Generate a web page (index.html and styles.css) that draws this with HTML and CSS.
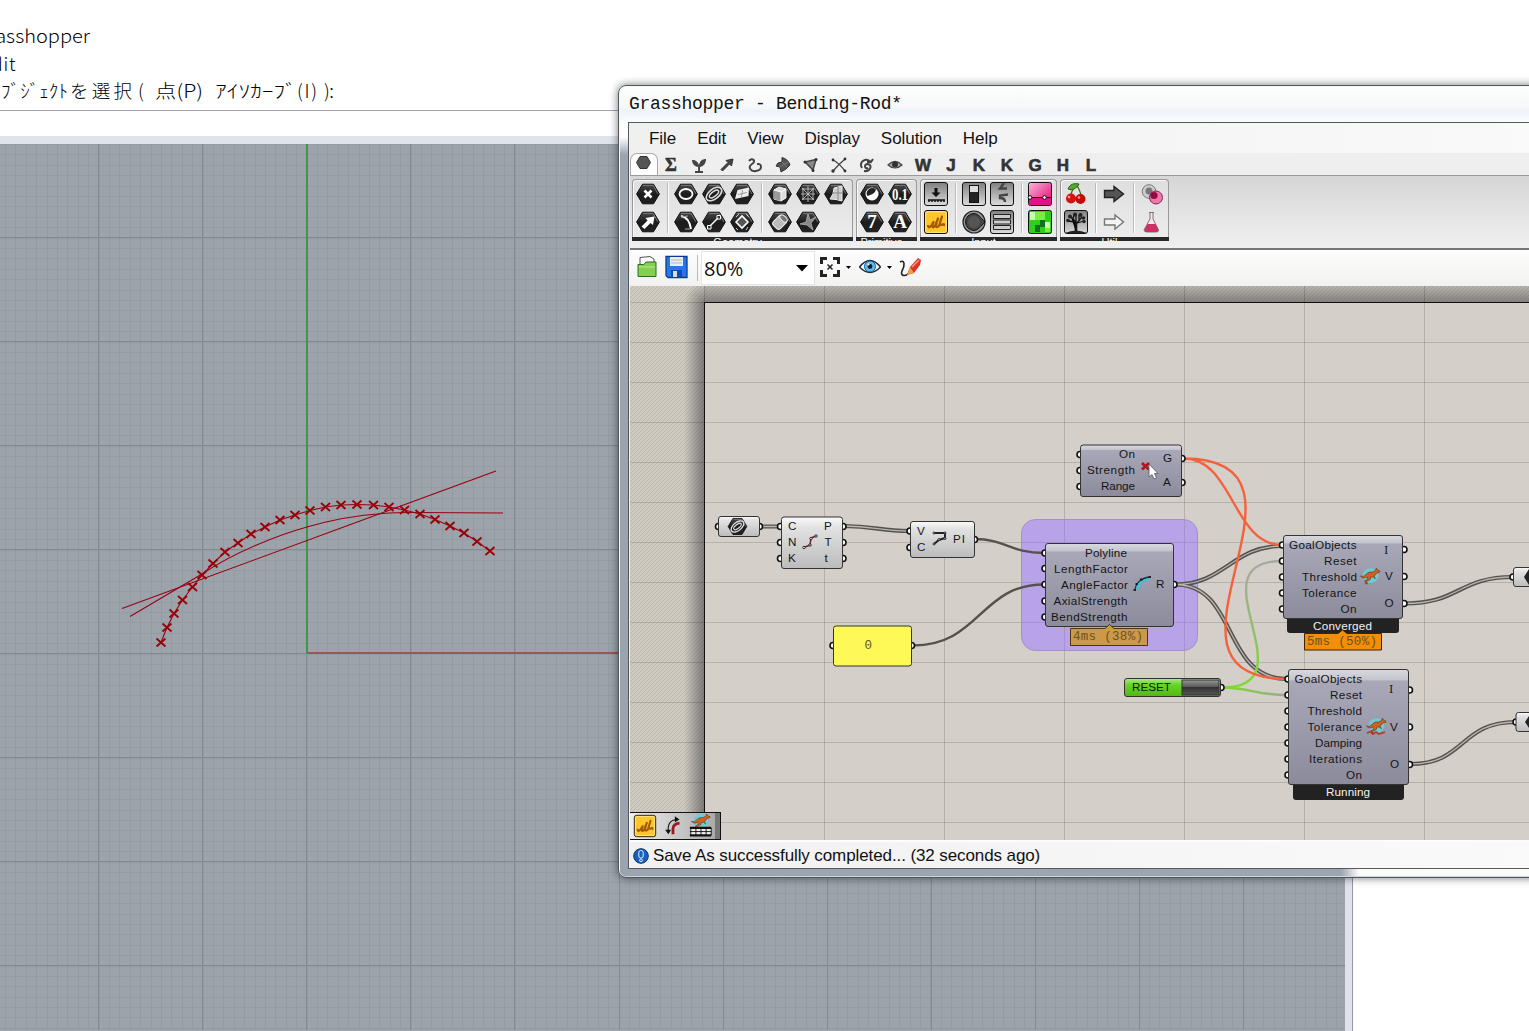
FILE: index.html
```html
<!DOCTYPE html>
<html lang="ja">
<head>
<meta charset="utf-8">
<title>Grasshopper - Bending-Rod*</title>
<link rel="stylesheet" href="styles.css">
</head>
<body>
<svg class="defs" aria-hidden="true">
  <defs>
    <linearGradient id="hexfill" x1="0" y1="0" x2="0" y2="1"><stop offset="0" stop-color="#4a4a4a"/><stop offset=".5" stop-color="#1c1c1c"/><stop offset="1" stop-color="#222"/></linearGradient>
    <linearGradient id="btn" x1="0" y1="0" x2="0" y2="1"><stop offset="0" stop-color="#808080"/><stop offset="1" stop-color="#dcdcdc"/></linearGradient>
    <linearGradient id="lite" x1="0" y1="0" x2="0" y2="1"><stop offset="0" stop-color="#fbfbfb"/><stop offset=".2" stop-color="#e2e2e2"/><stop offset="1" stop-color="#bcbcbc"/></linearGradient>
    <linearGradient id="dusk" x1="0" y1="0" x2="0" y2="1"><stop offset="0" stop-color="#d9d9e0"/><stop offset=".09" stop-color="#c4c4ce"/><stop offset=".1" stop-color="#a9a8b8"/><stop offset="1" stop-color="#8c8b9b"/></linearGradient>
    <linearGradient id="green" x1="0" y1="0" x2="0" y2="1"><stop offset="0" stop-color="#b0ec88"/><stop offset=".35" stop-color="#66d426"/><stop offset="1" stop-color="#52b812"/></linearGradient>
    <linearGradient id="knob" x1="0" y1="0" x2="0" y2="1"><stop offset="0" stop-color="#999"/><stop offset=".45" stop-color="#5a5a5a"/><stop offset=".5" stop-color="#333"/><stop offset="1" stop-color="#555"/></linearGradient>
    <linearGradient id="pink" x1="0" y1="0" x2="1" y2="1"><stop offset="0" stop-color="#fbb6dc"/><stop offset="1" stop-color="#e0006e"/></linearGradient>
    <linearGradient id="wireA" gradientUnits="userSpaceOnUse" x1="0" y1="687" x2="0" y2="561"><stop offset="0" stop-color="#7bdc2c"/><stop offset=".5" stop-color="#94bb70"/><stop offset="1" stop-color="#a9a9a2"/></linearGradient>
    <linearGradient id="wireB" gradientUnits="userSpaceOnUse" x1="1222" y1="0" x2="1288" y2="0"><stop offset="0" stop-color="#7bdc2c"/><stop offset="1" stop-color="#9ca892"/></linearGradient>
    <linearGradient id="shadeL" x1="0" y1="0" x2="1" y2="0"><stop offset="0" stop-color="#555" stop-opacity="0"/><stop offset="1" stop-color="#555" stop-opacity=".68"/></linearGradient>
    <linearGradient id="shadeT" x1="0" y1="0" x2="0" y2="1"><stop offset="0" stop-color="#555" stop-opacity=".2"/><stop offset="1" stop-color="#555" stop-opacity=".62"/></linearGradient>
    <radialGradient id="shadeC" gradientUnits="userSpaceOnUse" cx="704" cy="302" r="20"><stop offset="0" stop-color="#555" stop-opacity=".62"/><stop offset="1" stop-color="#555" stop-opacity="0"/></radialGradient>
    <pattern id="hatch" width="4" height="4" patternUnits="userSpaceOnUse"><path d="M-1 5L5-1M-1 1L1-1M3 5L5 3" stroke="#b7b3a9" stroke-width=".8"/></pattern>
    <marker id="pt" markerWidth="12" markerHeight="12" refX="6" refY="6" markerUnits="userSpaceOnUse" orient="0"><path d="M1.500 2L10.500 10M10.500 2L1.500 10" stroke="#990008" stroke-width="1.8"/></marker>
    <symbol id="hex" viewBox="0 0 28 28"><path d="M8.500 4.200H19.500L25.400 14L19.500 23.800H8.500L2.600 14Z" fill="url(#hexfill)" stroke="#111"/><path d="M9 5.400H19L24 14" fill="none" stroke="#888" stroke-width=".8"/></symbol>
    <symbol id="box" viewBox="0 0 28 28"><rect x="2.500" y="2.500" width="23" height="23" rx="2.500" fill="url(#btn)" stroke="#111"/></symbol>
    <symbol id="scribble" viewBox="0 0 28 28"><rect x="2.500" y="2.500" width="23" height="23" rx="2.500" fill="#ffc62b" stroke="#111"/><rect x="3.700" y="3.700" width="20.600" height="20.600" rx="1.500" fill="none" stroke="#ffe58c"/><path d="M6 17Q6 21 9 18L11.500 14Q9 22 13 18L16 10.500Q12 22 17 18L20 8.500Q16 19 20.500 16.500Q22.500 15 22 18" fill="none" stroke="#a45b00" stroke-width="2.200" stroke-linejoin="round"/></symbol>
    <symbol id="roo" viewBox="0 0 24 20"><ellipse cx="12" cy="9.500" rx="9" ry="8.500" fill="#6ccbd3"/><path d="M.5 10Q4 12 7 8Q10 4.500 14.500 5.500L18 3.500L18.500 1L20 3L23 4.500L22 6L19 6.500Q18 9 16 10L17.500 13L15 11L12 11.500Q13 14 10 15L7.500 16L8.500 19H6.500L5.500 15.500L9 13.500L8 11Q4 14 .5 10Z" fill="#d3601f" stroke="#4c2a18" stroke-width=".6"/></symbol>
    <symbol id="ring" viewBox="0 0 28 28"><g fill="none" stroke="#ddd"><ellipse cx="14" cy="14" rx="9" ry="5" transform="rotate(-38 14 14)" stroke-width="1.600"/><ellipse cx="14" cy="14" rx="5.500" ry="2.400" transform="rotate(-38 14 14)" stroke-width="1.400"/></g></symbol>
  </defs>
</svg>

<main class="rhino">
  <svg class="command" viewBox="0 0 619 110">
    <text x="90" y="43" text-anchor="end" textLength="115" lengthAdjust="spacingAndGlyphs">Grasshopper</text>
    <text x="15.500" y="70.500" text-anchor="end" textLength="24">dit</text>
    <text x="1" y="98" textLength="67" lengthAdjust="spacingAndGlyphs">ﾌﾞｼﾞｪｸﾄ</text>
    <text x="70" y="98" textLength="62">を選択</text>
    <text x="138" y="98">(</text>
    <text x="155" y="98" textLength="48" lengthAdjust="spacingAndGlyphs">点(P)</text>
    <text x="215" y="98" textLength="82" lengthAdjust="spacingAndGlyphs">ｱｲｿｶｰﾌﾞ</text>
    <text x="297" y="98" textLength="20">(I)</text>
    <text x="324" y="98" textLength="10">):</text>
  </svg>
  <section class="viewport">
    <svg viewBox="0 144 1345 887" width="1345" height="887">
      <g fill="none" shape-rendering="crispEdges">
        <path d="M-5.500 587H1345" stroke="#939ba3" stroke-width="886" stroke-dasharray="1 9.4"/>
        <path d="M672 133.500V1031" stroke="#939ba3" stroke-width="1345" stroke-dasharray="1 9.4"/>
        <path d="M-6 587H1345" stroke="#838a93" stroke-width="886" stroke-dasharray="1 103.100"/>
        <path d="M672 133.500V1031" stroke="#838a93" stroke-width="1345" stroke-dasharray="1 102.900"/>
        <path d="M307 144V653" stroke="#3e9848" stroke-width="2"/>
        <path d="M307 653H1345" stroke="#9b5555" stroke-width="2"/>
      </g>
      <g fill="none" stroke="#990012" stroke-width="1.100">
        <path d="M122 608.500L496 471"/>
        <path d="M130 616.500L202 574C235 552 278 535 307 527Q345 516 383 513.500Q395 512.500 413 512.500L503 513"/>
        <polyline marker-start="url(#pt)" marker-mid="url(#pt)" marker-end="url(#pt)" points="161,642.500 167,627.500 174,613.500 182.500,600 192.500,587 202,575 213,563.500 225,552 238,543 251,534 265,527 280,520 295,515 310,510.500 325.500,507 341,505 357,504.500 373.500,505 389,507 404.500,510 420,514 435,519.500 450,526 464,533 477,541.500 490,551"/>
      </g>
    </svg>
  </section>
</main>

<div class="window">
  <header class="titlebar">Grasshopper - Bending-Rod*</header>
  <div class="client">
    <nav class="menu"><span>File</span><span>Edit</span><span>View</span><span>Display</span><span>Solution</span><span>Help</span></nav>
    <div class="tabs">
      <span class="tab active"><svg viewBox="0 0 28 22"><path d="M10 4.500H17L20.500 10.500L17 16.500H10L6.500 10.500Z" fill="#555" stroke="#333"/></svg></span>
      <span class="tab sigma">Σ</span>
      <span class="tab"><svg viewBox="0 0 28 22"><path d="M14 18V13C10 13 7 10 7 6C11 6 13 8 14 11C15 7 17 5 21 5C21 9 19 12 15 13V18" fill="#444"/><path d="M10 18H18M14 11V18" stroke="#444" stroke-width="1.800"/></svg></span>
      <span class="tab"><svg viewBox="0 0 28 22"><path d="M8 15.500L15 8.500L13 6.500L20 5L18.500 12L16.500 10L9.500 17Z" fill="#444" stroke="#333"/></svg></span>
      <span class="tab"><svg viewBox="0 0 28 22"><path d="M8 7C11 3 16 7 11 10C6 13 10 18 15 17C22 16 21 9 16 10" fill="none" stroke="#444" stroke-width="2"/></svg></span>
      <span class="tab"><svg viewBox="0 0 28 22"><path d="M13 3.500Q19 5 21 11Q17 16 12 18L11 13L7 12Q8 8 13 8Z" fill="#555" stroke="#333"/><path d="M13 8L18 13M11 13L19 8" stroke="#888" stroke-width=".7"/></svg></span>
      <span class="tab"><svg viewBox="0 0 28 22"><path d="M8 8L19 5.500L16 16Z" fill="#888" stroke="#444" stroke-width="1.500"/><g fill="#333"><circle cx="8" cy="8" r="1.500"/><circle cx="19" cy="5.500" r="1.500"/><circle cx="16" cy="16.500" r="1.500"/></g></svg></span>
      <span class="tab"><svg viewBox="0 0 28 22"><path d="M8 6Q14 9 20 17M20 5Q14 10 8 17" fill="none" stroke="#444" stroke-width="1.300"/><g fill="#333"><circle cx="8" cy="6" r="1.400"/><circle cx="20" cy="5" r="1.400"/><circle cx="8" cy="17" r="1.700"/><circle cx="20" cy="17" r="1.400"/></g></svg></span>
      <span class="tab"><svg viewBox="0 0 28 22"><path d="M9 14C5 8 13 3 18 8L20 5M18 8H14M11 17C17 18 20 11 15 10C11 10 11 15 15 14" fill="none" stroke="#444" stroke-width="2"/></svg></span>
      <span class="tab"><svg viewBox="0 0 28 22"><path d="M7 11Q14 4 21 11Q14 17 7 11Z" fill="#aaa" stroke="#444" stroke-width="1.200"/><circle cx="14" cy="10.500" r="3" fill="#333"/></svg></span>
      <span class="tab">W</span><span class="tab">J</span><span class="tab">K</span><span class="tab">K</span><span class="tab">G</span><span class="tab">H</span><span class="tab">L</span>
    </div>
    <div class="ribbon">
      <section class="group">
        <div class="icons">
          <div class="cells c1">
            <svg viewBox="0 0 28 28"><use href="#hex"/><path d="M10.500 10.500L17.500 17.500M17.500 10.500L10.500 17.500" stroke="#fff" stroke-width="2.600"/></svg>
            <svg viewBox="0 0 28 28"><use href="#hex"/><path d="M7.500 18.500L13.500 12.500L11.500 10L20.500 8.500L19 17L16.500 15L10.500 21Z" fill="#fff"/></svg>
          </div>
          <div class="cells c3">
            <svg viewBox="0 0 28 28"><use href="#hex"/><ellipse cx="14" cy="14" rx="6.500" ry="5" fill="none" stroke="#fff" stroke-width="1.800"/></svg>
            <svg viewBox="0 0 28 28"><use href="#hex"/><use href="#ring"/></svg>
            <svg viewBox="0 0 28 28"><use href="#hex"/><path d="M7 19L9.500 10L21 7.500L20.500 16Z" fill="#eee"/><path d="M10 14.500L19 12.500M14.500 10L13.500 17" stroke="#999"/></svg>
            <svg viewBox="0 0 28 28"><use href="#hex"/><path d="M9 8C15 9 18 14 19 21" fill="none" stroke="#fff" stroke-width="2"/><path d="M9 9L16 8M18 21L13 21" stroke="#aaa"/></svg>
            <svg viewBox="0 0 28 28"><use href="#hex"/><path d="M9 19L19 9" stroke="#fff" stroke-width="1.500"/><path d="M7.500 17.500H11V21H7.500ZM17 7.500H20.500V11H17Z" fill="#333" stroke="#fff"/></svg>
            <svg viewBox="0 0 28 28"><use href="#hex"/><path d="M8 14L14 8L20 14L14 20Z" fill="#555" stroke="#fff" stroke-width="1.600"/><path d="M11 6L8 9M18 6L21 9M8 20L10 22M20 19L18 22" stroke="#ccc"/></svg>
          </div>
          <div class="cells c3">
            <svg viewBox="0 0 28 28"><use href="#hex"/><path d="M8 10L13 7L20 9V18L15 21L8 19Z" fill="#ddd" stroke="#eee"/><path d="M8 10L15 12V21L8 19Z" fill="#999"/><path d="M8 10L15 12L20 9M15 12V21" fill="none" stroke="#fff"/></svg>
            <svg viewBox="0 0 28 28"><use href="#hex"/><path d="M8 9H20M7 14H21M8 19H20M9 8V20M14 6V22M19 8V20M8 8L20 20M20 8L8 20" stroke="#bbb" stroke-width=".9"/></svg>
            <svg viewBox="0 0 28 28"><use href="#hex"/><path d="M8 19Q12 14 12 8L20 6V21Q14 19 8 19Z" fill="#ccc" stroke="#eee"/><path d="M16 7V20M11 13L20 13" stroke="#888"/></svg>
            <svg viewBox="0 0 28 28"><use href="#hex"/><g transform="rotate(45 14 14)"><rect x="9" y="8" width="10" height="13" rx="3" fill="#bbb" stroke="#eee"/><ellipse cx="14" cy="9" rx="4.500" ry="2.500" fill="#777" stroke="#eee"/></g></svg>
            <svg viewBox="0 0 28 28"><use href="#hex"/><path d="M6 16L12 14L14 6L16 12L22 9L17 15L19 22L13 17Z" fill="#888" stroke="#bbb" stroke-width=".7"/></svg>
          </div>
        </div>
        <footer><span>Geometry</span></footer>
      </section>
      <section class="group">
        <div class="icons">
          <div class="cells c2">
            <svg viewBox="0 0 28 28"><use href="#hex"/><circle cx="14" cy="14" r="6.500" fill="#fff"/><path d="M10 10A5.500 5.500 0 0 1 18 9.500Q17 14 9.500 16A5 5 0 0 1 10 10Z" fill="#222"/></svg>
            <svg viewBox="0 0 28 28" class="glyph"><use href="#hex"/><text x="14" y="19.500" font-size="16" textLength="16" lengthAdjust="spacingAndGlyphs">0.1</text></svg>
            <svg viewBox="0 0 28 28" class="glyph"><use href="#hex"/><text x="14" y="20" font-size="19">7</text></svg>
            <svg viewBox="0 0 28 28" class="glyph"><use href="#hex"/><text x="14" y="20" font-size="19">A</text></svg>
          </div>
        </div>
        <footer><span>Primitive</span></footer>
      </section>
      <section class="group">
        <div class="icons">
          <div class="cells c1">
            <svg viewBox="0 0 28 28"><use href="#box"/><path d="M12.500 8H15.500V12.500H18.500L14 17L9.500 12.500H12.500Z" fill="#111"/><path d="M6 20H23M7 20V22M10 20V22M13 20V22M16 20V22M19 20V22M22 20V22" stroke="#111" stroke-width="1.500"/></svg>
            <svg viewBox="0 0 28 28"><use href="#scribble"/></svg>
          </div>
          <div class="cells c2">
            <svg viewBox="0 0 28 28"><use href="#box"/><rect x="9.500" y="5.500" width="9" height="17" fill="#ddd" stroke="#111"/><rect x="10" y="12" width="8" height="10" fill="#222"/></svg>
            <svg viewBox="0 0 28 28"><use href="#box"/><path d="M16 3L12 8.500H19M20 14.500L12 15.500V18Q17 18 17 22" fill="none" stroke="#444" stroke-width="2.400"/></svg>
            <svg viewBox="0 0 28 28"><circle cx="14" cy="14" r="11" fill="#999" stroke="#222" stroke-width="1.200"/><path d="M14 5.500A8.500 8.500 0 1 0 14 22.500C18 22.500 21 18 25 14C21 10 18 5.500 14 5.500Z" fill="#444" stroke="#111"/><circle cx="14" cy="14" r="6" fill="#555"/></svg>
            <svg viewBox="0 0 28 28"><use href="#box"/><path d="M5.500 6.500H22.500V10.500H5.500ZM5.500 12H22.500V16H5.500ZM5.500 17.500H22.500V21.500H5.500Z" fill="#ccc" stroke="#222"/></svg>
          </div>
          <div class="cells c1">
            <svg viewBox="0 0 28 28"><rect x="2.500" y="2.500" width="23" height="23" rx="2" fill="url(#pink)" stroke="#111"/><path d="M3 17.500H25" stroke="#111"/><rect x="3" y="18" width="22" height="7" fill="#df148b"/><circle cx="4" cy="17.500" r="1.800" fill="#fff" stroke="#111"/><circle cx="18.500" cy="17.500" r="1.800" fill="#fff" stroke="#111"/></svg>
            <svg viewBox="0 0 28 28"><rect x="2.500" y="2.500" width="23" height="23" rx="2" fill="#2ed01b" stroke="#111"/><path d="M4 4H9V12H4ZM19 14H24V20H19Z" fill="#c7ffa8"/><path d="M14 12H19V19H14ZM9 17H14V24H9Z" fill="#11711d"/><path d="M9 4H19V12H9ZM19 20H24V24H19Z" fill="#72f340"/></svg>
          </div>
        </div>
        <footer><span>Input</span></footer>
      </section>
      <section class="group">
        <div class="icons">
          <div class="cells c1">
            <svg viewBox="0 0 28 28"><path d="M15 5C10 9 9 12 9 16M15 5C17 10 19 12 19 16" fill="none" stroke="#4c6b20" stroke-width="1.300"/><path d="M6 9C8 4 12 3 17 4C15 8 10 11 6 9Z" fill="#56a82d" stroke="#245f12"/><circle cx="9" cy="18.500" r="5" fill="#d51212"/><circle cx="18.500" cy="19" r="5" fill="#c40909"/><circle cx="7" cy="17" r="1.300" fill="#ff9c9c"/><circle cx="17" cy="17.500" r="1.300" fill="#ff9c9c"/></svg>
            <svg viewBox="0 0 28 28"><use href="#box"/><path d="M14 24V14L9 9M14 16L20 9M14 14L14 6M13 14L6 13M15 15L22 13M11 11L12 7M17 12L17 7" stroke="#111" stroke-width="1.300"/><path d="M14 24V14" stroke="#111" stroke-width="2.600"/><g fill="#222"><circle cx="8" cy="8.500" r="2"/><circle cx="13" cy="6.500" r="2"/><circle cx="18.500" cy="7" r="2"/><circle cx="21.500" cy="10" r="1.800"/><circle cx="6" cy="12.500" r="1.800"/><circle cx="22" cy="13.500" r="1.700"/></g><path d="M3 25Q14 20 25 25" fill="#222"/></svg>
          </div>
          <div class="cells c1">
            <svg viewBox="0 0 28 28"><path d="M4.500 10.500H14V6.500L23.500 14L14 21.500V17.500H4.500Z" fill="#555" stroke="#222" stroke-width="1.400"/></svg>
            <svg viewBox="0 0 28 28"><path d="M4.500 11H15V7L23.500 14L15 21V17H4.500Z" fill="#f4f4f4" stroke="#777" stroke-width="1.400"/></svg>
          </div>
          <div class="cells c1">
            <svg viewBox="0 0 28 28"><circle cx="11" cy="11.500" r="6.800" fill="#ccc" stroke="#777"/><circle cx="11" cy="11" r="3.500" fill="#777"/><circle cx="18" cy="17.500" r="6.500" fill="#ee78ab" stroke="#8f2253"/><circle cx="16" cy="15.500" r="3.600" fill="#8d0c45"/></svg>
            <svg viewBox="0 0 28 28"><path d="M11 4.500H16M12 5V11L6 22Q6 24 9 24H18Q21 24 20.500 22L15 11V5" fill="#f6e5ec" stroke="#777"/><path d="M9.500 16H17.500L20.500 22Q20 24 18 24H8Q6 23 6.500 21.500Z" fill="#ce3066"/></svg>
          </div>
        </div>
        <footer><span>Util</span></footer>
      </section>
    </div>
    <div class="toolbar">
      <svg class="open" viewBox="0 0 20 24"><path d="M3 11V2.500L13 1.500L17 4V11" fill="#fafafa" stroke="#555"/><path d="M1 9.500H7L9 7H19V21.500H1Z" fill="#84cf50" stroke="#277320"/><path d="M2 12H18" stroke="#b7ec90"/></svg>
      <svg class="save" viewBox="0 0 23 24"><path d="M1 1.500H22V22.500H3L1 20.500Z" fill="#2679e4" stroke="#0b3c91" stroke-width="1.300"/><path d="M5 2H18V11H5Z" fill="#e7edf3"/><path d="M6 5H17M6 8H17" stroke="#bbb"/><path d="M6 15H17V22H6Z" fill="#0d4db0"/><path d="M8 16H12V22H8Z" fill="#ddd"/></svg>
      <i class="rule"></i>
      <div class="combo"><span>80%</span><svg width="12" height="7"><path d="M0 0H12L6 6.500Z"/></svg></div>
      <svg class="focus" viewBox="0 0 20 20"><path d="M1.500 7V1.500H7M13 1.500H18.500V7M18.500 13V18.500H13M7 18.500H1.500V13" fill="none" stroke="#222" stroke-width="3"/><path d="M7.500 7.500L12.500 12.500M12.500 7.500L7.500 12.500" stroke="#222" stroke-width="1.500"/></svg>
      <svg class="caret" width="5" height="3"><path d="M0 0H5L2.500 3Z"/></svg>
      <svg class="eye" viewBox="0 0 22 16"><path d="M.5 8Q11-5 21.500 8Q11 19 .5 8Z" fill="#eef7fb" stroke="#223" stroke-width="1.300"/><circle cx="11" cy="7.500" r="5.500" fill="#64b9e8" stroke="#11609b"/><circle cx="11" cy="7.500" r="2.400" fill="#0b1c33"/><circle cx="9.500" cy="5.500" r="1" fill="#fff"/></svg>
      <svg class="caret" width="5" height="3"><path d="M0 0H5L2.500 3Z"/></svg>
      <svg class="pen" viewBox="0 0 22 20"><path d="M1 5C6 2 6 9 3 14C1 19 6 20 10 16" fill="none" stroke="#222" stroke-width="1.600"/><path d="M11 10L19 1L22 3L21 8L15 16L8 18Z" fill="#dc3525"/><path d="M11 10L15 16L8 18Z" fill="#e9a04c"/><path d="M13 10L20 3" stroke="#ff9a84" stroke-width="1.500"/></svg>
    </div>
    <div class="canvas">
      <svg class="graph" viewBox="630 286 899 554" width="899" height="554">
        <rect x="630" y="286" width="899" height="554" fill="#cfcbc1"/>
        <rect x="630" y="286" width="899" height="554" fill="url(#hatch)"/>
        <rect x="684" y="302" width="20" height="538" fill="url(#shadeL)"/>
        <rect x="704" y="286" width="825" height="16" fill="url(#shadeT)"/>
        <rect x="684" y="286" width="20" height="16" fill="url(#shadeC)"/>
        <rect x="704.500" y="302.500" width="840" height="560" fill="#d4cfc8" stroke="#111"/>
        <path class="grid" d="M704.500 286V302M824.500 286V840M944.500 286V840M1064.500 286V840M1184.500 286V840M1304.500 286V840M1424.500 286V840M630 302.500H704M630 342.500H1529M630 382.500H1529M630 422.500H1529M630 462.500H1529M630 502.500H1529M630 542.500H1529M630 582.500H1529M630 622.500H1529M630 662.500H1529M630 702.500H1529M630 742.500H1529M630 782.500H1529M630 822.500H1529"/>
        <rect x="1021.500" y="519.500" width="176" height="131" rx="14" fill="#b9a3e8" stroke="#a291c8"/>
        <path class="grid faint" d="M1064.500 520V650M1184.500 520V650M1022 542.500H1197M1022 582.500H1197M1022 622.500H1197"/>

        <g class="wires">
          <path class="single" d="M975 539C1005 539 1010 553 1044 553M913 645.500C980 645.500 980 584.500 1044 584.500"/>
          <path class="outer" d="M760 526.500H779M844 526C875 526 880 531 909 531M1175 584.500C1225 584.500 1232 546 1282 546M1175 584.500C1238 584.500 1222 679 1287 679M1405 603.500C1460 603.500 1458 577 1513 577M1411 764C1465 764 1460 722 1516 722"/>
          <path class="inner" d="M760 526.500H779M844 526C875 526 880 531 909 531M1175 584.500C1225 584.500 1232 546 1282 546M1175 584.500C1238 584.500 1222 679 1287 679M1405 603.500C1460 603.500 1458 577 1513 577M1411 764C1465 764 1460 722 1516 722"/>
          <path d="M1222 687.500C1313 687.500 1191 561 1282 561" stroke="url(#wireA)"/>
          <path d="M1222 687.500C1250 687.500 1255 695 1287 695" stroke="url(#wireB)"/>
          <path class="hot" d="M1184 458.500C1233 458.500 1233 545 1282 545M1184 458.500C1340 458.500 1131 679 1287 679"/>
        </g>

        <g class="grips">
          <circle cx="718.500" cy="526.500" r="3"/><circle cx="759.500" cy="526.500" r="3"/>
          <circle cx="780.500" cy="526.500" r="3"/><circle cx="780.500" cy="542.500" r="3"/><circle cx="780.500" cy="558.500" r="3"/>
          <circle cx="843" cy="526.500" r="3"/><circle cx="843" cy="542.500" r="3"/><circle cx="843" cy="558.500" r="3"/>
          <circle cx="910" cy="531" r="3"/><circle cx="910" cy="547.500" r="3"/><circle cx="974.500" cy="539.500" r="3"/>
          <circle cx="833" cy="645.500" r="3"/><circle cx="911.500" cy="645.500" r="3"/>
          <circle cx="1080" cy="454.500" r="3"/><circle cx="1080" cy="470.500" r="3"/><circle cx="1080" cy="486.500" r="3"/><circle cx="1182" cy="458.500" r="3"/><circle cx="1182" cy="482.500" r="3"/>
          <circle cx="1045" cy="553" r="3"/><circle cx="1045" cy="568.500" r="3"/><circle cx="1045" cy="584.500" r="3"/><circle cx="1045" cy="601" r="3"/><circle cx="1045" cy="617" r="3"/><circle cx="1174" cy="584.500" r="3"/>
          <circle cx="1221" cy="687.500" r="3"/>
          <circle cx="1282.500" cy="545" r="3"/><circle cx="1282.500" cy="561" r="3"/><circle cx="1282.500" cy="577" r="3"/><circle cx="1282.500" cy="593" r="3"/><circle cx="1282.500" cy="609" r="3"/><circle cx="1404" cy="549.500" r="3"/><circle cx="1404" cy="576.500" r="3"/><circle cx="1404" cy="603.500" r="3"/>
          <circle cx="1288" cy="679" r="3"/><circle cx="1288" cy="695" r="3"/><circle cx="1288" cy="711" r="3"/><circle cx="1288" cy="727" r="3"/><circle cx="1288" cy="743" r="3"/><circle cx="1288" cy="759" r="3"/><circle cx="1288" cy="775" r="3"/><circle cx="1409.500" cy="690" r="3"/><circle cx="1409.500" cy="727" r="3"/><circle cx="1409.500" cy="764.500" r="3"/>
          <circle cx="1513" cy="577" r="3"/><circle cx="1516" cy="722" r="3"/>
        </g>

        <g class="nodes">
          <rect x="718.500" y="516.500" width="41" height="20" rx="2.500" fill="url(#lite)"/>
          <rect x="781.500" y="517" width="61" height="51.500" rx="2.500" fill="url(#lite)"/>
          <rect x="910.500" y="521.500" width="64" height="36" rx="2.500" fill="url(#lite)"/>
          <rect x="833.500" y="626" width="78" height="40" rx="2.500" fill="#fff958"/>
          <rect x="1080.500" y="445" width="101" height="51.500" rx="2.500" fill="url(#dusk)"/>
          <rect x="1045.500" y="543.500" width="128" height="83" rx="2.500" fill="url(#dusk)"/>
          <rect x="1124.500" y="678.500" width="96" height="18" rx="2.500" fill="url(#green)"/>
          <rect x="1182" y="680" width="37" height="15" fill="url(#knob)"/>
          <path d="M1287 618H1399V630Q1399 633 1396 633H1290Q1287 633 1287 630Z" fill="#222" stroke="none"/>
          <rect x="1283.500" y="535.500" width="119" height="83" rx="2.500" fill="url(#dusk)"/>
          <path d="M1293 785H1404V797Q1404 800 1401 800H1296Q1293 800 1293 797Z" fill="#222" stroke="none"/>
          <rect x="1288.500" y="669.500" width="120" height="115" rx="2.500" fill="url(#dusk)"/>
          <rect x="1513.500" y="567.500" width="40" height="19" rx="2.500" fill="url(#lite)"/>
          <rect x="1516" y="712.500" width="40" height="19" rx="2.500" fill="url(#lite)"/>
          <path d="M1070.500 628.500H1105L1109.500 624.500L1114 628.500H1147.500V645.500H1070.500Z" fill="#cc984a" stroke="#4d3517"/>
          <path d="M1304.500 633.500H1338L1342.500 630L1347 633.500H1381.500V650H1304.500Z" fill="#f28e08" stroke="#3f2500"/>
        </g>

        <g transform="translate(726 515) scale(.82)"><use href="#hex" width="28" height="28"/><use href="#ring" width="28" height="28"/></g>
        <path d="M1524 577L1529 569V585ZM1525 722L1529 716V728Z" fill="#222"/>
        <path d="M804 547.500L810 545L811 538L816 536" fill="none" stroke="#7c1c24" stroke-width="1.500"/>
        <g fill="#fff" stroke="#222"><circle cx="804" cy="547.500" r="1.200"/><circle cx="810" cy="545" r="1.200"/><circle cx="811" cy="538.500" r="1.200"/><circle cx="816" cy="536" r="1.200"/></g>
        <path d="M934 533H945V538L939 540L934 544" fill="none" stroke="#222" stroke-width="2"/>
        <g fill="#fff" stroke="#222"><circle cx="934" cy="533" r="1"/><circle cx="945" cy="533" r="1"/><circle cx="945" cy="538.500" r="1"/><circle cx="939" cy="539.500" r="1"/><circle cx="934" cy="544" r="1"/></g>
        <path d="M1137 589C1138 583 1143 579 1149 578.500" fill="none" stroke="#3cc4d8" stroke-width="3"/>
        <path d="M1135 591C1135 583 1141 578 1150 577" fill="none" stroke="#16304a" stroke-width="1.300"/>
        <path d="M1133.500 590H1136M1135.500 584H1138M1140 579.500H1142.500M1148.500 577H1151" stroke="#222" stroke-width="2.200"/>
        <path d="M1142 463L1149 469.500M1149 463L1142 469.500" stroke="#b31420" stroke-width="2.800"/>
        <path d="M1149 464V477L1152 474.500L1154 479L1156.500 478L1154.500 473.500H1158Z" fill="#fff" stroke="#555" stroke-width=".8"/>
        <use href="#roo" x="1360" y="567" width="21" height="18"/>
        <use href="#roo" x="1366" y="717" width="21" height="18"/>
        <path d="M1367 733L1371 731.500L1373 734L1376 732L1379 734L1385 732" fill="none" stroke="#b13a26" stroke-width="1.800"/>

        <g class="labels">
          <text x="788" y="530">C</text><text x="788" y="546">N</text><text x="788" y="562">K</text>
          <text x="824" y="530">P</text><text x="824.500" y="546">T</text><text x="824.500" y="562">t</text>
          <text x="917" y="535">V</text><text x="917" y="551">C</text><text x="953" y="543" textLength="12">PI</text>
          <text x="1163" y="462">G</text><text x="1163" y="486">A</text><text x="1156" y="588">R</text>
          <text x="1384" y="553.500" class="serif">I</text><text x="1385" y="580">V</text><text x="1384.500" y="607">O</text>
          <text x="1389" y="693" class="serif">I</text><text x="1390" y="730.500">V</text><text x="1390" y="768">O</text>
          <text x="1132" y="691" textLength="39">RESET</text>
        </g>
        <g class="labels">
          <text x="1119" y="458" textLength="16">On</text><text x="1087" y="474" textLength="48">Strength</text><text x="1101" y="490" textLength="34">Range</text>
          <text x="1085" y="556.500" textLength="42">Polyline</text><text x="1054" y="572.500" textLength="74">LengthFactor</text><text x="1061" y="588.500" textLength="67">AngleFactor</text><text x="1053.500" y="604.500" textLength="74">AxialStrength</text><text x="1051" y="620.500" textLength="76.500">BendStrength</text>
          <text x="1289" y="548.500" textLength="67.500">GoalObjects</text><text x="1324" y="564.500" textLength="32.500">Reset</text><text x="1302" y="580.500" textLength="55">Threshold</text><text x="1302" y="596.500" textLength="54.500">Tolerance</text><text x="1340.500" y="612.500" textLength="16">On</text>
          <text x="1294.500" y="682.500" textLength="67.500">GoalObjects</text><text x="1330" y="698.500" textLength="32">Reset</text><text x="1307.500" y="714.500" textLength="54.500">Threshold</text><text x="1307.500" y="730.500" textLength="54.500">Tolerance</text><text x="1315" y="746.500" textLength="47">Damping</text><text x="1309" y="762.500" textLength="53">Iterations</text><text x="1346" y="778.500" textLength="16">On</text>
          <text x="1313" y="629.500" textLength="59" class="light">Converged</text><text x="1326" y="795.500" textLength="44" class="light">Running</text>
        </g>
        <g class="mono">
          <text x="864.500" y="649">0</text>
          <text x="1073" y="640" textLength="70">4ms (38%)</text>
          <text x="1307" y="644.500" textLength="70">5ms (50%)</text>
        </g>
      </svg>
      <div class="palette">
        <svg viewBox="0 0 28 28"><use href="#scribble"/></svg>
        <svg viewBox="0 0 28 28"><path d="M9 20C8 11 12 7 19 7" fill="none" stroke="#222" stroke-width="1.300"/><path d="M16 3.500L21 7L16 10ZM5.500 18H12L9 23Z" fill="#111"/><path d="M14 23V17Q14 12 21 11" fill="none" stroke="#9d1824" stroke-width="3"/></svg>
        <svg viewBox="0 0 28 28"><use href="#roo" x="1" y="0" width="26" height="18"/><path d="M2 16H25V24H2Z" fill="#eee"/><path d="M2 16H25M2 24H25" stroke="#111" stroke-width="2.500"/><path d="M3 16V24M8.500 16V24M14 16V24M19.500 16V24M25 16V24M2 20H25" stroke="#111"/></svg>
      </div>
    </div>
    <footer class="status">
      <svg viewBox="0 0 16 16"><circle cx="8" cy="8" r="7.300" fill="#1961bd" stroke="#082e6e"/><rect x="5.800" y="2.500" width="4.400" height="7.500" rx="2" fill="#1961bd" stroke="#dff2ff"/><circle cx="8" cy="12.300" r="1.400" fill="#1961bd" stroke="#dff2ff"/></svg>
      <span>Save As successfully completed... (32 seconds ago)</span>
    </footer>
  </div>
</div>
</body>
</html>
```
FILE: styles.css
```css
* { box-sizing: border-box; }
body {
  margin: 0;
  width: 1529px;
  height: 1031px;
  overflow: hidden;
  position: relative;
  background: #fff;
  font-family: "Liberation Sans", "Noto Sans CJK JP", sans-serif;
  color: #111;
}
svg { display: block; flex: none; }
.defs { position: absolute; width: 0; height: 0; }

/* Modelling application behind the editor */
.rhino { display: flex; flex-direction: column; height: 1031px; }
.command {
  width: 619px;
  height: 110px;
  font-family: "Noto Sans CJK JP", sans-serif;
  font-weight: 300;
  font-size: 18.5px;
  fill: #000;
}
.viewport {
  width: 1353px;
  height: 895px;
  margin-top: 26px;
  border-top: 8px solid #dfe3ec;
  border-right: 1px solid #96969f;
  background: linear-gradient(90deg, #9ca3ab 1345px, #dfe2ec 1345px);
  box-shadow: 0 -25px 0 #fff, 200px -25px 0 #fff, 0 -26px 0 #a2a2b2, 200px -26px 0 #a2a2b2;
}

/* Editor window */
.window {
  position: absolute;
  left: 618px;
  top: 85px;
  width: 940px;
  height: 793px;
  padding: 0 0 9px 9px;
  border: 1px solid #555a60;
  border-radius: 8px;
  box-shadow: inset 1px 1px 0 #f4f7fa, inset 0 -1px 0 #cdd3da, 0 0 8px rgba(0, 0, 0, .55);
  background:
    linear-gradient(#fcfdfd, #f7f9f9 20px, #eef3fa 25px, #fbfcfc 36px) 0 0 / 100% 37px no-repeat,
    linear-gradient(#fff, #fff 14px, #9aa3ae 32px, #9aa3ae) 0 37px / 10px 100% no-repeat,
    linear-gradient(90deg, #9ca5b0 722px, #fbfbfb 740px);
}
.titlebar {
  height: 36px;
  padding-left: 1px;
  line-height: 36px;
  font-family: "Liberation Mono", monospace;
  font-size: 18px;
  letter-spacing: -.31px;
}
.client {
  height: 747px;
  display: flex;
  flex-direction: column;
  border: 1px solid #55585c;
  border-width: 1px 0 1px 1px;
  padding-left: 1px;
  background: #f4f4f4;
}
.menu {
  height: 30px;
  padding: 2px 0 0 19px;
  display: flex;
  align-items: center;
  gap: 21px;
  font-size: 17px;
  letter-spacing: -.06px;
  background: linear-gradient(90deg, #f0f0f0, #f5f5f5 500px, #fafafa);
}
.tabs {
  height: 22px;
  display: flex;
  background: #efefef;
  font-weight: 900;
  font-size: 17px;
  color: #333;
}
.tab { width: 28px; height: 22px; margin-left: -1px; margin-right: 1px; text-align: center; line-height: 25px; -webkit-text-stroke: .6px #333; }
.tab svg { width: 28px; height: 22px; margin-top: 1px; }
.tab.active {
  margin: 0;
  border: 1px solid #aaa;
  border-bottom: 0;
  border-radius: 7px 7px 0 0;
  background: #fdfdfd;
  height: 23px;
}
.tab.active svg { margin: -2px 0 0 -1px; }
.sigma { font-family: "Liberation Serif", serif; font-size: 18px; }
.ribbon {
  height: 75px;
  display: flex;
  align-items: flex-start;
  gap: 3px;
  padding: 3px 0 0 2px;
  border-top: 1px solid #999;
  border-bottom: 2px solid #777;
  background: linear-gradient(#d6d6d6, #f0f0f0);
}
.group {
  height: 62px;
  padding: 0 2px 0 1px;
  border: 1px solid #999;
  border-bottom: 0;
  border-radius: 4px 4px 0 0;
  background: linear-gradient(#dedede, #ededed);
  box-shadow: inset 1px 1px 0 #fafafa;
}
.icons { display: flex; gap: 10px; height: 57px; }
.cells { display: grid; grid-auto-rows: 28px; position: relative; }
.cells + .cells::before {
  content: "";
  position: absolute;
  left: -5px;
  top: 3px;
  width: 2px;
  height: 50px;
  background: linear-gradient(90deg, #bbb 50%, #fff 50%);
}
.cells svg { width: 28px; height: 28px; }
.c1 { grid-template-columns: 28px; }
.c2 { grid-template-columns: 28px 28px; }
.c3 { grid-template-columns: 28px 28px 28px; }
.glyph { font-family: "Liberation Serif", serif; font-weight: bold; fill: #fff; text-anchor: middle; }
.group footer {
  height: 4px;
  margin: 0 -3px 0 -2px;
  overflow: hidden;
  background: #282828;
  color: #fff;
  text-align: center;
  font-size: 11px;
  line-height: 10px;
}
.group footer span { display: block; margin-left: -10px; }

.toolbar {
  height: 36px;
  display: flex;
  align-items: center;
  padding-left: 7px;
  background: linear-gradient(#fdfdfd, #f1f2f0);
}
.toolbar > svg { position: relative; top: -1px; }
.open { width: 20px; height: 24px; }
.save { width: 23px; height: 24px; margin-left: 8px; }
.rule { width: 1px; height: 26px; margin-left: 9px; background: #bbb; }
.combo {
  width: 114px;
  height: 34px;
  margin-left: 3px;
  padding: 0 6px 0 2px;
  display: flex;
  align-items: center;
  justify-content: space-between;
  border: 1px solid #e6e6e6;
  background: #fff;
  font-family: "Open Sans", "Noto Sans", sans-serif;
  font-size: 20px;
}
.focus { width: 20px; height: 20px; margin-left: 5px; }
.caret { margin-left: 6px; }
.eye { width: 22px; height: 16px; margin-left: 8px; }
.pen { width: 22px; height: 20px; margin-left: 7px; }

.canvas { height: 554px; position: relative; overflow: hidden; }
.grid { fill: none; stroke: #000; stroke-opacity: .15; }
.grid.faint { stroke-opacity: .1; }
.wires { fill: none; stroke-width: 2.4; }
.single { stroke: #57514e; }
.outer { stroke: #555350; stroke-width: 4.2; }
.inner { stroke: #b9b5ae; stroke-width: 1.3; }
.hot { stroke: #f4623c; }
.grips { fill: #fff; stroke: #111; stroke-width: 1.6; }
.nodes { stroke: #333; }
.labels {
  font-family: "Liberation Sans", sans-serif;
  font-size: 11.7px;
  fill: #151515;
}
.labels .light { fill: #f2f2f2; }
.serif { font-family: "DejaVu Serif", serif; font-size: 11px; }
.mono { font-family: "Liberation Mono", monospace; font-size: 12.5px; fill: #6b5220; }
.palette {
  position: absolute;
  left: 0;
  bottom: 0;
  width: 91px;
  height: 28px;
  padding-left: 1px;
  display: flex;
  border: 1px solid #111;
  border-left: 0;
  background: linear-gradient(90deg, #eee, #aaa 85px, #777 85px);
}
.palette svg { width: 28px; height: 26px; }
.status {
  flex: 1;
  display: flex;
  align-items: center;
  gap: 4px;
  padding: 2px 0 0 3px;
  border-top: 2px solid #fdfdfd;
  font-size: 17px;
  background: linear-gradient(90deg, #f1f1f1, #fafafa);
}
.status svg { width: 16px; height: 16px; }
.status span { letter-spacing: -.1px; }
```
